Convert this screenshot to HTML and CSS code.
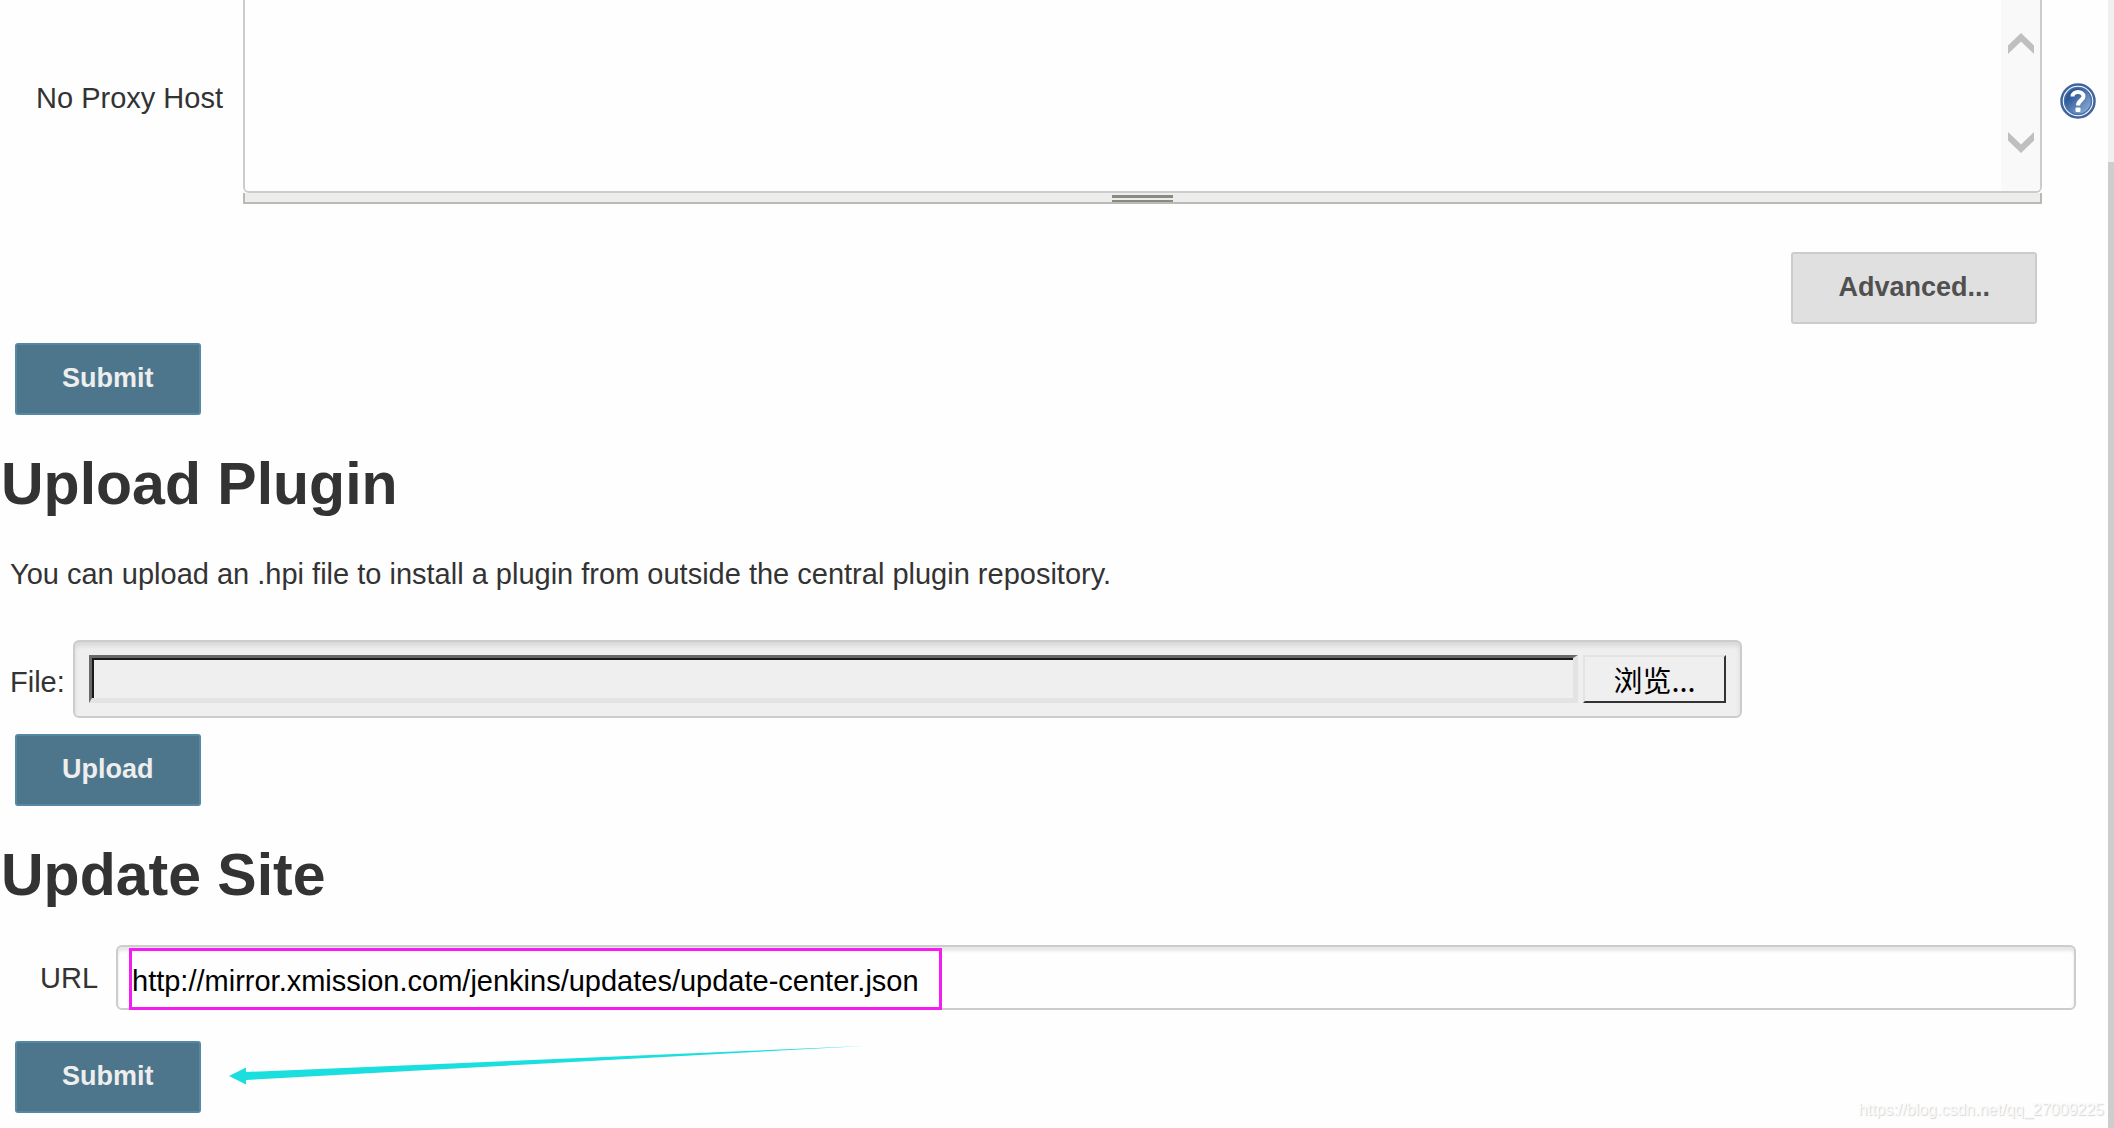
FILE: index.html
```html
<!DOCTYPE html>
<html lang="en">
<head>
<meta charset="utf-8">
<title>Plugin Manager - Advanced</title>
<link rel="stylesheet" href="styles.css">
</head>
<body>
<div class="page">
  <main class="content">
    <form>
      <div class="proxy">
        <label class="proxy-label" for="no-proxy">No Proxy Host</label>
        <div class="area">
          <textarea id="no-proxy" class="area-text"></textarea>
          <div class="area-scroll" aria-hidden="true">
            <svg width="26" height="22" viewBox="0 0 26 22"><path d="M0 21V12.500L13 0L26 12.500V21L13 8.500Z" fill="#bfbfbf"/></svg>
            <svg width="26" height="22" viewBox="0 0 26 22"><path d="M0 0V8.500L13 21L26 8.500V0L13 12.500Z" fill="#bfbfbf"/></svg>
          </div>
        </div>
        <a class="help" href="#help" aria-label="Help">
          <svg width="36" height="36" viewBox="0 0 36 36">
            <defs><linearGradient id="disc" x1="0" y1="0" x2="1" y2="1"><stop offset=".25" stop-color="#2b5797"/><stop offset="1" stop-color="#9dbbe0"/></linearGradient></defs>
            <circle cx="18" cy="18" r="16.500" fill="#fff" stroke="#3f659f" stroke-width="2.500"/>
            <circle cx="18" cy="18" r="13.500" fill="url(#disc)" stroke="#4a6fa8" stroke-width="1.500"/>
            <path d="M12.500 13.500C12.500 7.500 23.500 7.500 23.500 13.500C23.500 17 18 17.500 18 22.500" fill="none" stroke="#fff" stroke-width="4"/>
            <rect x="15.500" y="24.500" width="5" height="4.500" rx="1" fill="#fff"/>
          </svg>
        </a>
        <div class="grip"><span class="grip-bars"></span></div>
      </div>
      <div class="advanced-row"><button type="button" class="button button-plain">Advanced...</button></div>
      <div class="actions"><button type="button" class="button">Submit</button></div>
    </form>

    <h1>Upload Plugin</h1>
    <form>
      <p class="intro">You can upload an .hpi file to install a plugin from outside the central plugin repository.</p>
      <div class="file-row">
        <label class="file-label" for="file">File:</label>
        <div class="file-box">
          <input id="file" class="file-name" type="text" readonly>
          <button type="button" class="browse">浏览...</button>
        </div>
      </div>
      <div class="actions"><button type="button" class="button">Upload</button></div>
    </form>

    <h1>Update Site</h1>
    <form>
      <div class="url-row">
        <label class="url-label" for="url">URL</label>
        <div class="url-field">
          <input id="url" class="url-input" type="text" value="http://mirror.xmission.com/jenkins/updates/update-center.json">
          <span class="highlight"></span>
        </div>
      </div>
      <div class="actions">
        <button type="button" class="button">Submit</button>
        <svg class="arrow" width="636" height="40" viewBox="0 0 636 40" aria-hidden="true"><path d="M0 31L17 22.500V27L635 1L17 35V39.500Z" fill="#1adfde"/></svg>
      </div>
    </form>
    <span class="watermark">https://blog.csdn.net/qq_27009225</span>
  </main>
  <div class="scrollbar" aria-hidden="true"></div>
</div>
</body>
</html>
```
FILE: styles.css
```css
* { box-sizing: border-box; }

body {
  margin: 0;
  background: #fefefe;
  color: #333;
  font: 29px/34px "Liberation Sans", Arial, "Noto Sans CJK SC", sans-serif;
}

.page {
  display: flex;
  min-height: 100vh;
}

.content {
  position: relative;
  flex: 1;
  min-width: 0;
}

.scrollbar {
  width: 6px;
  background: linear-gradient(#f0f0f0 162px, #cdcdcd 162px);
}

svg { display: block; }

/* proxy exceptions */
.proxy {
  display: grid;
  grid-template-columns: 207px 1fr 36px;
  grid-template-rows: 193px 11px;
  padding: 0 12px 0 36px;
}

.proxy-label {
  align-self: center;
  padding-top: 2px;
}

.area {
  display: flex;
  border: 2px solid #ccc;
  border-top: 0;
  border-radius: 0 0 6px 6px;
  overflow: hidden;
}

.area-text {
  flex: 1;
  border: 0;
  outline: 0;
  padding: 8px;
  resize: none;
  font: inherit;
  background: #fefefe;
}

.area-scroll {
  display: flex;
  flex-direction: column;
  justify-content: space-between;
  align-items: center;
  width: 39px;
  padding: 33px 0 37px;
  background: #f9f9f9;
}

.help {
  grid-column: 3;
  grid-row: 1 / 3;
  align-self: center;
  padding-bottom: 2px;
}

.area,
.grip { margin-right: 18px; }

.grip {
  grid-column: 2;
  grid-row: 2;
  display: flex;
  justify-content: center;
  padding-top: 2px;
  background: #ededed;
  border: 2px solid #babab2;
  border-top: 0;
}

.grip-bars {
  width: 61px;
  height: 7px;
  border: solid #888c80;
  border-width: 3px 0 2px;
}

/* buttons */
.button {
  height: 72px;
  padding: 0 45px 2px;
  border: 2px solid #5788a1;
  border-radius: 3px;
  background: #4d768c;
  color: #eee;
  font: bold 27px/32px "Liberation Sans", Arial, sans-serif;
}

.button-plain {
  border-color: #ccc;
  background: #e0e0e0;
  color: #505050;
}

.advanced-row {
  display: flex;
  justify-content: flex-end;
  padding: 48px 71px 19px 0;
}

.actions {
  position: relative;
  display: flex;
  padding-left: 15px;
}

h1 {
  margin: 33px 0 34px;
  padding-left: 1px;
  font-size: 59px;
  line-height: 72px;
}

/* upload */
.intro {
  margin: 0 10px 49px;
  padding-top: 3px;
}

.file-row {
  display: flex;
  align-items: center;
  margin-bottom: 16px;
  padding-left: 10px;
}

.file-label {
  width: 63px;
  padding-top: 6px;
}

.file-box {
  display: flex;
  gap: 5px;
  width: 82%;
  max-width: 1669px;
  height: 78px;
  padding: 13px 14px;
  border: 2px solid #ccc;
  border-radius: 6px;
  background: #efefef;
  box-shadow: inset 0 4px 4px #d8d8d8;
}

.file-name {
  flex: 1;
  min-width: 0;
  border: solid;
  border-width: 3px 5px 5px 3px;
  border-color: #696969 #e3e3e3 #e3e3e3 #696969;
  outline: 0;
  background: #efefef;
  box-shadow: inset 2px 2px #1a1a1a;
  font: inherit;
}

.browse {
  width: 143px;
  padding: 0;
  border: 2px solid;
  border-color: #e3e3e3 #333 #333 #e3e3e3;
  background: #efefef;
  color: #000;
  font: 29px/34px "Noto Sans CJK SC", sans-serif;
}

/* update site */
.url-row {
  display: flex;
  align-items: center;
  margin-bottom: 31px;
  padding: 0 32px 0 40px;
}

.url-label { width: 76px; }

.url-field {
  position: relative;
  flex: 1;
}

.url-input {
  display: block;
  width: 100%;
  height: 65px;
  padding: 7px 14px 0;
  border: 2px solid #ccc;
  border-radius: 6px;
  outline: 0;
  background: #fefefe;
  box-shadow: inset 0 4px 3px #e8e8e8;
  color: #000;
  font: 29px/34px "Liberation Sans", Arial, sans-serif;
}

/* annotations drawn over the form */
.highlight {
  position: absolute;
  left: 13px;
  top: 3px;
  width: 813px;
  height: 62px;
  border: 3px solid #f41cf1;
  pointer-events: none;
}

.arrow {
  position: absolute;
  left: 229px;
  top: 4px;
}

.watermark {
  position: absolute;
  right: 4px;
  bottom: 8px;
  color: #fafafa;
  font-size: 16px;
  line-height: 20px;
  text-shadow: 1px 1px 1px #d4d4d4;
}
```
